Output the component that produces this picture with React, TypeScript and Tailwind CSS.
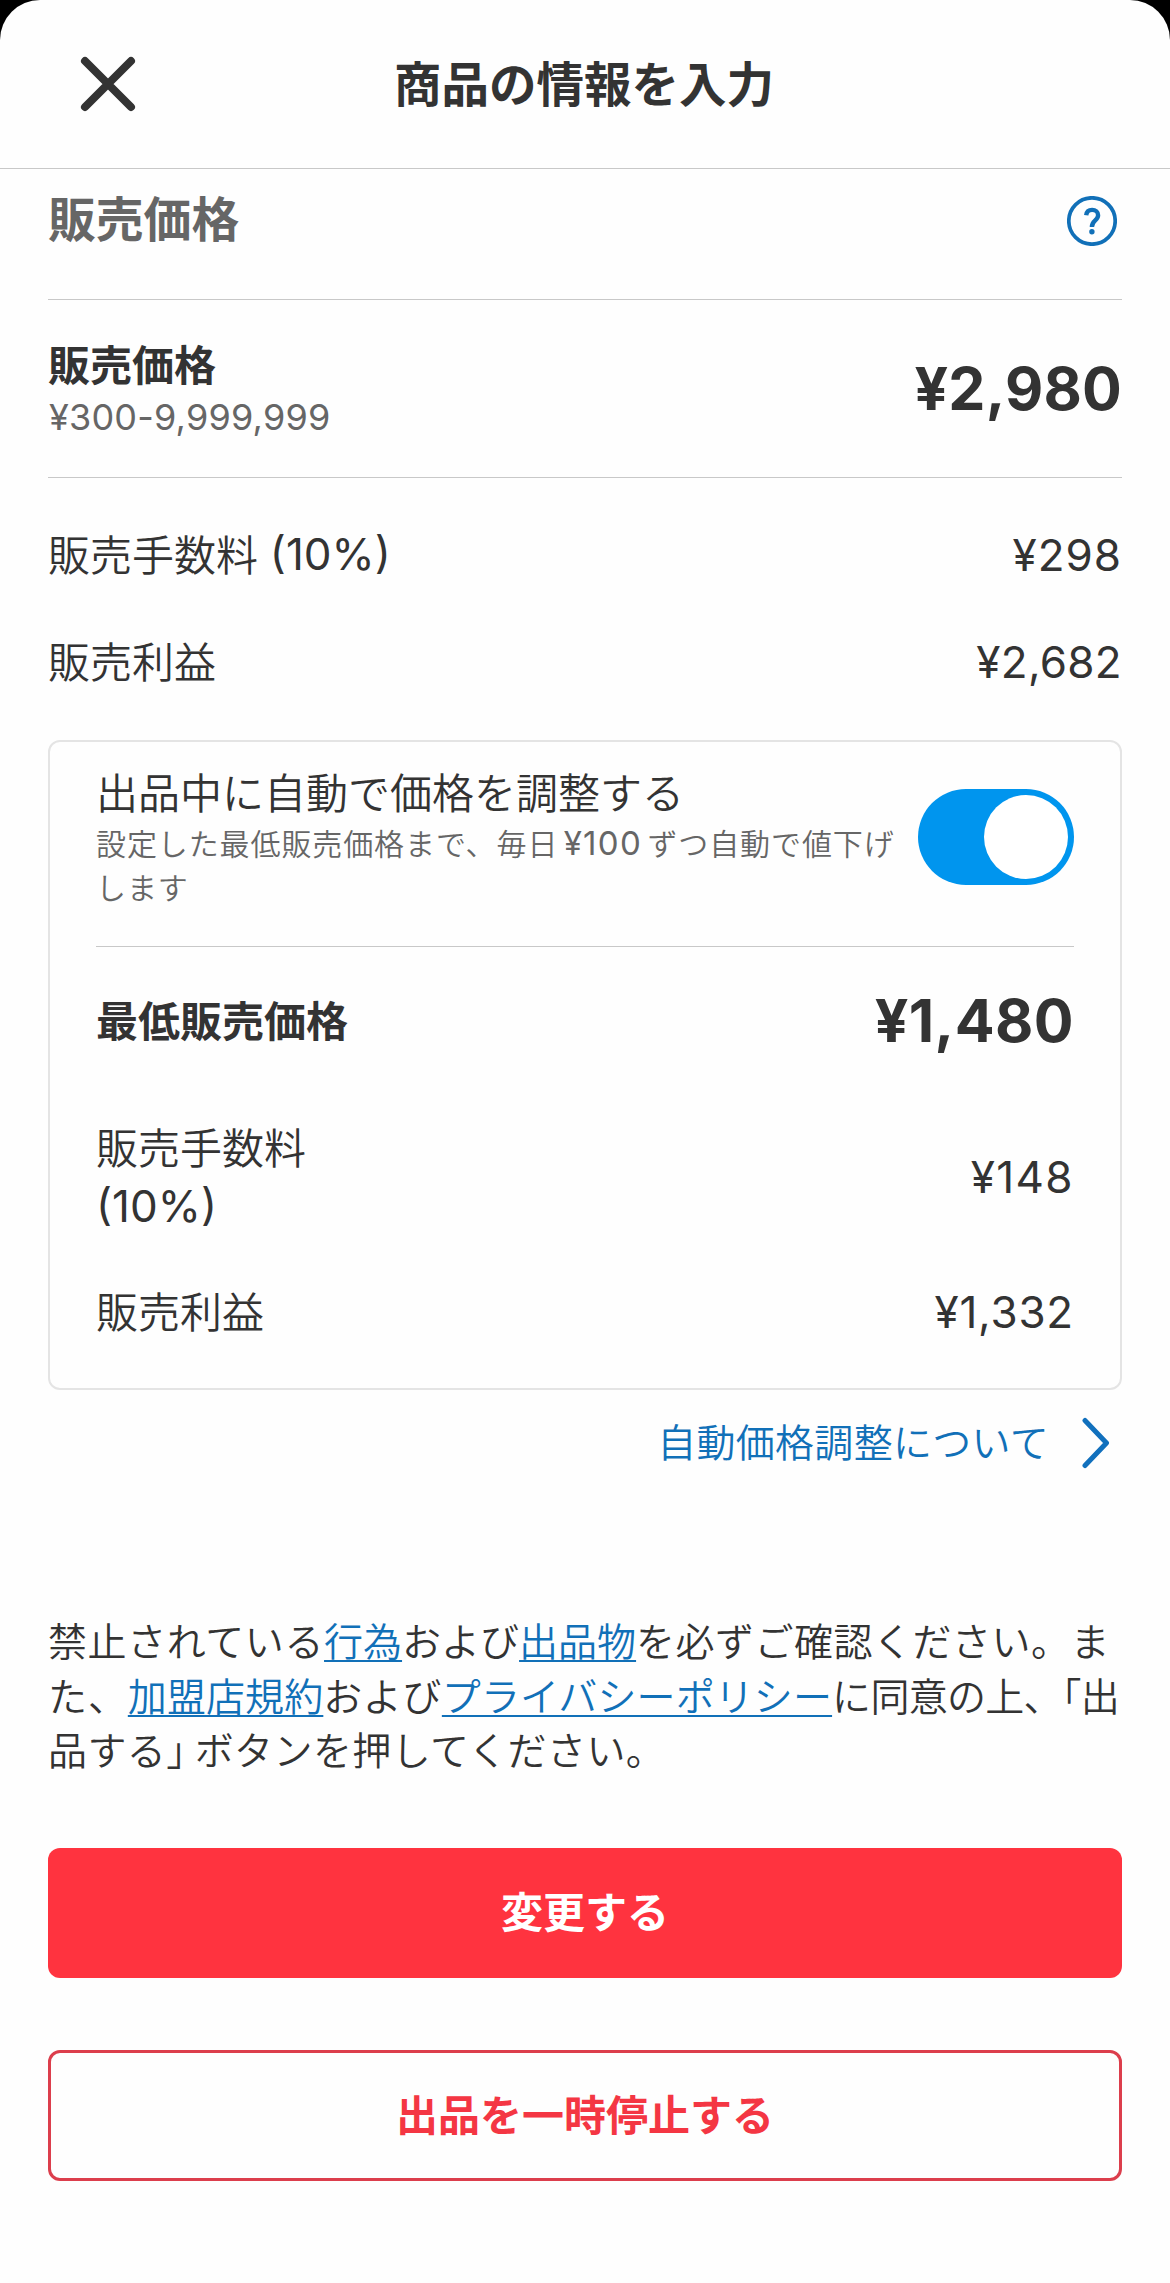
import type { ReactNode } from "react";

function CloseIcon() {
  return (
    <svg className="h-[60px] w-[60px]" viewBox="0 0 60 60" fill="none" stroke="#333" strokeWidth="8" strokeLinecap="round">
      <path d="M7 7 53 53M53 7 7 53" />
    </svg>
  );
}

function HelpIcon() {
  return (
    <svg className="h-[50px] w-[50px]" viewBox="0 0 50 50" fill="none">
      <circle cx="25" cy="25" r="23.2" stroke="#1170b8" strokeWidth="3.7" />
      <path d="M19.2 19.2C19.6 15.8 21.9 13.9 25.1 13.9C28.6 13.9 31.1 16.1 31.1 19.2C31.1 21.6 29.9 22.9 28 24.6C25.9 26.4 24.9 27.6 24.9 31" stroke="#1170b8" strokeWidth="4.4" />
      <circle cx="24.9" cy="35.8" r="2.7" fill="#1170b8" />
    </svg>
  );
}

function Chevron() {
  return (
    <svg className="h-[52px] w-[28px]" viewBox="0 0 28 52" fill="none" stroke="#1170bd" strokeWidth="5" strokeLinecap="round" strokeLinejoin="round">
      <path d="M3 3.5 24.5 26 3 48.5" />
    </svg>
  );
}

function Row({ label, value, className, valueClass }: { label: ReactNode; value: string; className: string; valueClass: string }) {
  return (
    <div className={`flex items-center justify-between ${className}`}>
      <div className="text-[42px] leading-[59px] font-[350]">{label}</div>
      <div className={`text-[44px] leading-[59px] ${valueClass}`}>{value}</div>
    </div>
  );
}

function Rate() {
  return <span className="align-[1px] text-[44px] leading-none font-normal">(10%)</span>;
}

function Link({ children, className = "" }: { children: ReactNode; className?: string }) {
  return (
    <a className={`text-[#1170b8] underline decoration-2 underline-offset-[4px] [text-decoration-skip-ink:none] ${className}`}>{children}</a>
  );
}

export default function App() {
  return (
    <div lang="ja" className="h-[2283px] w-[1170px] overflow-hidden bg-black">
      <main className="h-full rounded-t-[40px] bg-[#fefefe] font-['Inter','Noto_Sans_CJK_JP',sans-serif] whitespace-nowrap text-[#333]">
        <header className="grid h-[169px] grid-cols-[200px_1fr_200px] items-center border-b border-[#c8c8c8]">
          <button className="ml-[78px] w-[60px]"><CloseIcon /></button>
          <h1 className="pt-[2px] pr-[2px] text-center text-[47.5px] leading-[60px] font-bold">商品の情報を入力</h1>
        </header>

        <div className="px-12">
          <div className="flex h-[131px] items-start justify-between border-b border-[#c8c8c8]">
            <h2 className="mt-[2px] text-[47.8px] leading-[98px] font-bold text-[#666]">販売価格</h2>
            <button className="mt-[27px] mr-[5px]"><HelpIcon /></button>
          </div>

          <div className="flex h-[178px] items-center justify-between border-b border-[#c8c8c8]">
            <div className="mt-[6px] leading-[52px]">
              <div className="text-[42px] font-bold">販売価格</div>
              <div className="-mt-px ml-px text-[36px] tracking-[0.2px] text-[#666]">¥300-9,999,999</div>
            </div>
            <div className="mt-[2px] text-[59px] font-bold tracking-[0.2px]">¥2,980</div>
          </div>

          <div className="pt-6">
            <Row className="h-[107px]" label={<>販売手数料 <Rate /></>} value="¥298" valueClass="tracking-[1px]" />
            <Row className="h-[107px]" label="販売利益" value="¥2,682" valueClass="tracking-[0.3px]" />
          </div>

          <section className="mt-6 h-[650px] rounded-xl border-2 border-[#e4e4e4] px-[46px]">
            <div className="flex h-[205px] justify-between border-b border-[#c8c8c8]">
              <div className="pt-[29px] font-[350]">
                <div className="text-[42px] leading-[46px]">出品中に自動で価格を調整する</div>
                <div className="mt-[6px] text-[30px] leading-[43.5px] tracking-[0.9px] text-[#666] [word-spacing:-4px]">
                  設定した最低販売価格まで、毎日 <span className="text-[33px] leading-none font-normal tracking-[1.3px]">¥100</span> ずつ自動で値下げ<br />します
                </div>
              </div>
              <button className="mt-[47px] flex h-24 w-[156px] shrink-0 items-center justify-end rounded-full bg-[#0095ee] pr-[6px]">
                <span className="h-[84px] w-[84px] rounded-full bg-white" />
              </button>
            </div>
            <div className="flex h-[149px] items-center justify-between">
              <div className="text-[42px] font-bold">最低販売価格</div>
              <div className="text-[59px] font-bold tracking-[0.4px]">¥1,480</div>
            </div>
            <Row className="h-[163px]" label={<>販売手数料<br /><Rate /></>} value="¥148" valueClass="tracking-[1.4px]" />
            <Row className="h-[106px]" label="販売利益" value="¥1,332" valueClass="tracking-[0.8px]" />
          </section>

          <a className="flex h-[106px] items-center justify-end gap-[33px] pr-[12px] text-[39px] font-[350] tracking-[0.3px] text-[#1170b8]">
            自動価格調整について
            <Chevron />
          </a>

          <p className="mt-[119px] text-[39px] leading-[54.5px] font-[350]">
            <span className="tracking-[0.6px]">禁止されている</span><Link>行為</Link>および<Link>出品物</Link>
            <span className="tracking-[0.5px]">を必ずご確認ください。ま</span><br />
            <span className="tracking-[0.9px]">た、</span><Link className="tracking-[0.1px]">加盟店規約</Link>
            <span className="tracking-[0.5px]">および</span><Link className="tracking-[0.1px]">プライバシーポリシー</Link>
            <span className="tracking-[-0.7px]">に同意の上、「出</span><br />
            <span className="tracking-[0.4px]">品する<span className="tracking-[-10.5px]">」</span>ボタンを押してください。</span>
          </p>

          <button className="mt-[69px] block h-[130px] w-full rounded-xl bg-[#ff333f] text-[42px] font-bold text-white">変更する</button>
          <button className="mt-[72px] block h-[131px] w-full rounded-xl border-3 border-[#dc3e4c] text-[42px] font-bold text-[#f43643]">出品を一時停止する</button>
        </div>
      </main>
    </div>
  );
}
